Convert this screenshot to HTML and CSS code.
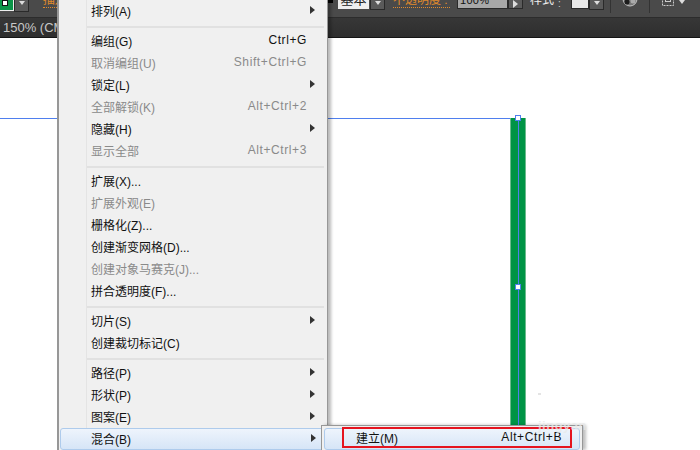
FILE: index.html
```html
<!DOCTYPE html>
<html lang="zh">
<head>
<meta charset="utf-8">
<title>混合</title>
<link rel="stylesheet" href="styles.css">
</head>
<body>
<div class="toolbar">
  <div class="swatch"><span class="swatch-in"></span></div>
  <div class="tb-btn tb-arrow-first"><i class="down"></i></div>
  <div class="tb-label stroke-label">描边</div>
  <div class="spacer"></div>
  <div class="line-black"></div>
  <div class="basic">基本</div>
  <div class="tb-btn tb-after-basic"><i class="down"></i></div>
  <div class="tb-label opacity-label">不透明度 :</div>
  <div class="opacity-input">100%</div>
  <div class="tb-btn tb-right"><i class="right"></i></div>
  <div class="style-label">样式</div>
  <span class="colon">:</span>
  <div class="style-swatch"></div>
  <div class="tb-btn"><i class="down"></i></div>
  <div class="divider first-div"></div>
  <svg class="globe" width="16" height="16" viewBox="0 0 16 16"><circle cx="8" cy="8" r="7" fill="#777" stroke="#c4c4c4"/><circle cx="5" cy="11" r="2.5" fill="#1c1c1c"/><circle cx="11" cy="10" r="2.5" fill="#aaa"/></svg>
  <div class="divider second-div"></div>
  <svg class="frame" width="14" height="14" viewBox="0 0 14 14"><rect x="1.5" y="0.5" width="11" height="11" fill="none" stroke="#ccc" stroke-dasharray="2 1"/><rect x="4.5" y="2.5" width="5" height="5" fill="none" stroke="#ccc"/></svg>
  <i class="down frame-arrow"></i>
</div>
<div class="tabbar"><span class="zoom-text">150% (CMYK/预览)</span></div>
<main class="canvas">
  <div class="selection-top"></div>
  <div class="bar">
    <div class="bar-line"></div>
    <span class="handle handle-top"></span>
    <span class="handle handle-mid"></span>
  </div>
  <span class="tick"></span>
</main>
<nav class="menu">
  <div class="row"><span class="name">排列(A)</span><i class="tri"></i></div>
  <div class="sep"></div>
  <div class="row"><span class="name">编组(G)</span><span class="key">Ctrl+G</span></div>
  <div class="row off"><span class="name">取消编组(U)</span><span class="key">Shift+Ctrl+G</span></div>
  <div class="row"><span class="name">锁定(L)</span><i class="tri"></i></div>
  <div class="row off"><span class="name">全部解锁(K)</span><span class="key">Alt+Ctrl+2</span></div>
  <div class="row"><span class="name">隐藏(H)</span><i class="tri"></i></div>
  <div class="row off"><span class="name">显示全部</span><span class="key">Alt+Ctrl+3</span></div>
  <div class="sep"></div>
  <div class="row"><span class="name">扩展(X)...</span></div>
  <div class="row off"><span class="name">扩展外观(E)</span></div>
  <div class="row"><span class="name">栅格化(Z)...</span></div>
  <div class="row"><span class="name">创建渐变网格(D)...</span></div>
  <div class="row off"><span class="name">创建对象马赛克(J)...</span></div>
  <div class="row"><span class="name">拼合透明度(F)...</span></div>
  <div class="sep"></div>
  <div class="row"><span class="name">切片(S)</span><i class="tri"></i></div>
  <div class="row"><span class="name">创建裁切标记(C)</span></div>
  <div class="sep"></div>
  <div class="row"><span class="name">路径(P)</span><i class="tri"></i></div>
  <div class="row"><span class="name">形状(P)</span><i class="tri"></i></div>
  <div class="row"><span class="name">图案(E)</span><i class="tri"></i></div>
  <div class="row hot"><span class="name">混合(B)</span><i class="tri"></i></div>
</nav>
<nav class="submenu">
  <div class="sub-row"><span class="name">建立(M)</span><span class="key">Alt+Ctrl+B</span></div>
  <div class="redbox"></div>
</nav>
<div class="watermark">jingyan</div>
</body>
</html>
```
FILE: styles.css
```css
* { box-sizing: border-box; }
html, body { margin: 0; padding: 0; height: 100%; overflow: hidden; background: #fff; }
body { width: 700px; height: 450px; position: relative; font-family: "Liberation Sans", "Noto Sans CJK SC", sans-serif; }

.toolbar { height: 18px; background: #4a4a4a; border-bottom: 1px solid #2c2c2c; display: flex; align-items: flex-start; color: #ddd; font-size: 12px; overflow: hidden; }
.swatch { width: 14px; height: 11px; background: #0b9548; border-right: 1px solid #eee; border-bottom: 1px solid #eee; padding: 0 3px 2px 2px; flex: none; }
.swatch-in { display: block; width: 6px; height: 6px; border: 1px solid #111; background: #fff; }
.tb-btn { width: 15px; height: 10px; background: #5a5a5a; border: 1px solid #2a2a2a; border-top: 0; display: flex; justify-content: center; padding-top: 1px; flex: none; }
.tb-arrow-first { height: 12px; }
.down { display: block; width: 0; height: 0; border-left: 3px solid transparent; border-right: 3px solid transparent; border-top: 4px solid #ddd; }
.right { display: block; width: 0; height: 0; border-top: 4px solid transparent; border-bottom: 4px solid transparent; border-left: 5px solid #ddd; }
.tb-label { color: #e08a2c; height: 15px; line-height: 14px; margin-top: -7px; border-bottom: 1px dotted #e08a2c; flex: none; white-space: nowrap; }
.stroke-label { margin-left: 14px; width: 30px; }
.spacer { width: 252px; flex: none; }
.line-black { width: 8px; height: 3px; background: #000; flex: none; margin-right: 5px; }
.basic { width: 31px; height: 9px; background: #eee; color: #222; font-size: 13px; line-height: 0; text-align: center; flex: none; overflow: hidden; white-space: nowrap; }
.tb-after-basic { margin-left: 1px; }
.opacity-label { margin-left: 8px; width: 57px; }
.colon { color: #ccc; font-size: 10px; line-height: 8px; width: 17px; padding-left: 4px; flex: none; }
.opacity-input { width: 51px; height: 9px; margin-left: 7px; background: #a8a8a8; border: 1px solid #2a2a2a; border-top: 0; color: #111; font-size: 11px; line-height: 0; padding-left: 2px; letter-spacing: 0.3px; flex: none; overflow: hidden; }
.tb-right { height: 9px; padding-top: 0; align-items: flex-start; }
.style-label { margin-left: 7px; color: #eee; line-height: 14px; margin-top: -7px; flex: none; }
.style-swatch { width: 18px; height: 9px; background: #e8e8e8; border: 1px solid #2a2a2a; border-top: 0; flex: none; }
.divider { width: 1px; height: 13px; background: #333; flex: none; }
.first-div { margin-left: 6px; }
.globe { margin: -9px 0 0 11px; flex: none; }
.second-div { margin-left: 11px; }
.frame { margin: -6px 0 0 11px; flex: none; }
.frame-arrow { margin: 0 0 0 4px; flex: none; }

.tabbar { height: 20px; background: linear-gradient(#373737, #2e2e2e); border-bottom: 1px solid #151515; color: #c8c8c8; font-size: 13px; line-height: 19px; padding-left: 3px; white-space: nowrap; }

.canvas { position: relative; height: 412px; background: #fff; }
.selection-top { position: absolute; left: 0; top: 80px; width: 518px; height: 1px; background: #4f7fee; }
.bar { position: absolute; left: 510px; top: 80px; width: 16px; height: 332px; background: #009445; border-left: 1px solid #6cba8c; border-right: 1px solid #6cba8c; }
.bar-line { position: absolute; left: 7px; top: 0; width: 1px; height: 100%; background: #4f7fee; }
.handle { position: absolute; left: 4px; width: 6px; height: 6px; background: #fff; border: 1px solid #4f7fee; }
.handle-top { top: -3px; }
.handle-mid { top: 166px; }
.tick { position: absolute; left: 538px; top: 355px; width: 3px; height: 2px; background: #e4e4e4; }
.watermark { position: absolute; left: 538px; top: 418px; color: rgba(232,232,232,.75); font-size: 13px; font-weight: bold; letter-spacing: 0.5px; z-index: 4; }

.menu { position: absolute; left: 57px; top: 0; width: 271px; height: 450px; background: #f0f0f0; border-left: 2px solid #979797; border-right: 1px solid #979797; box-shadow: 3px 0 3px rgba(0,0,0,.28); padding-left: 1px; font-size: 12px; color: #111; z-index: 2; }
.menu::before { content: ""; position: absolute; left: 27px; top: 0; bottom: 0; width: 1px; background: #e4e4e4; }
.row { position: relative; height: 22px; display: flex; align-items: center; padding: 0 20px 2px 31px; justify-content: space-between; }
.off { color: #8a8a8a; }
.key { letter-spacing: 0.6px; }
.tri { display: block; width: 0; height: 0; border-top: 4px solid transparent; border-bottom: 4px solid transparent; border-left: 5px solid #333; margin-right: -8px; }
.sep { position: relative; height: 8px; margin-left: 27px; margin-right: 3px; }
.sep::after { content: ""; position: absolute; left: 0; right: 0; top: 4px; height: 2px; background: #e1e1e1; }
.hot { background: linear-gradient(#eef4fc, #d6e5f7); border: 1px solid #aecbec; border-radius: 3px; margin: 0 -1px 0 0; padding: 0 19px 2px 30px; }

.submenu { position: absolute; left: 321px; top: 425px; width: 262px; height: 25px; background: #f0f0f0; border: 1px solid #979797; border-bottom: 0; box-shadow: 3px 0 3px rgba(0,0,0,.25); z-index: 3; font-size: 12px; color: #111; padding: 2px 2px 0; }
.sub-row { height: 22px; display: flex; align-items: center; justify-content: space-between; padding: 0 17px 4px 31px; background: linear-gradient(#eef4fc, #d6e5f7); border: 1px solid #aecbec; border-radius: 3px; }
.redbox { position: absolute; left: 20px; top: 1px; width: 230px; height: 21px; border: 2px solid #e5141f; }
```
